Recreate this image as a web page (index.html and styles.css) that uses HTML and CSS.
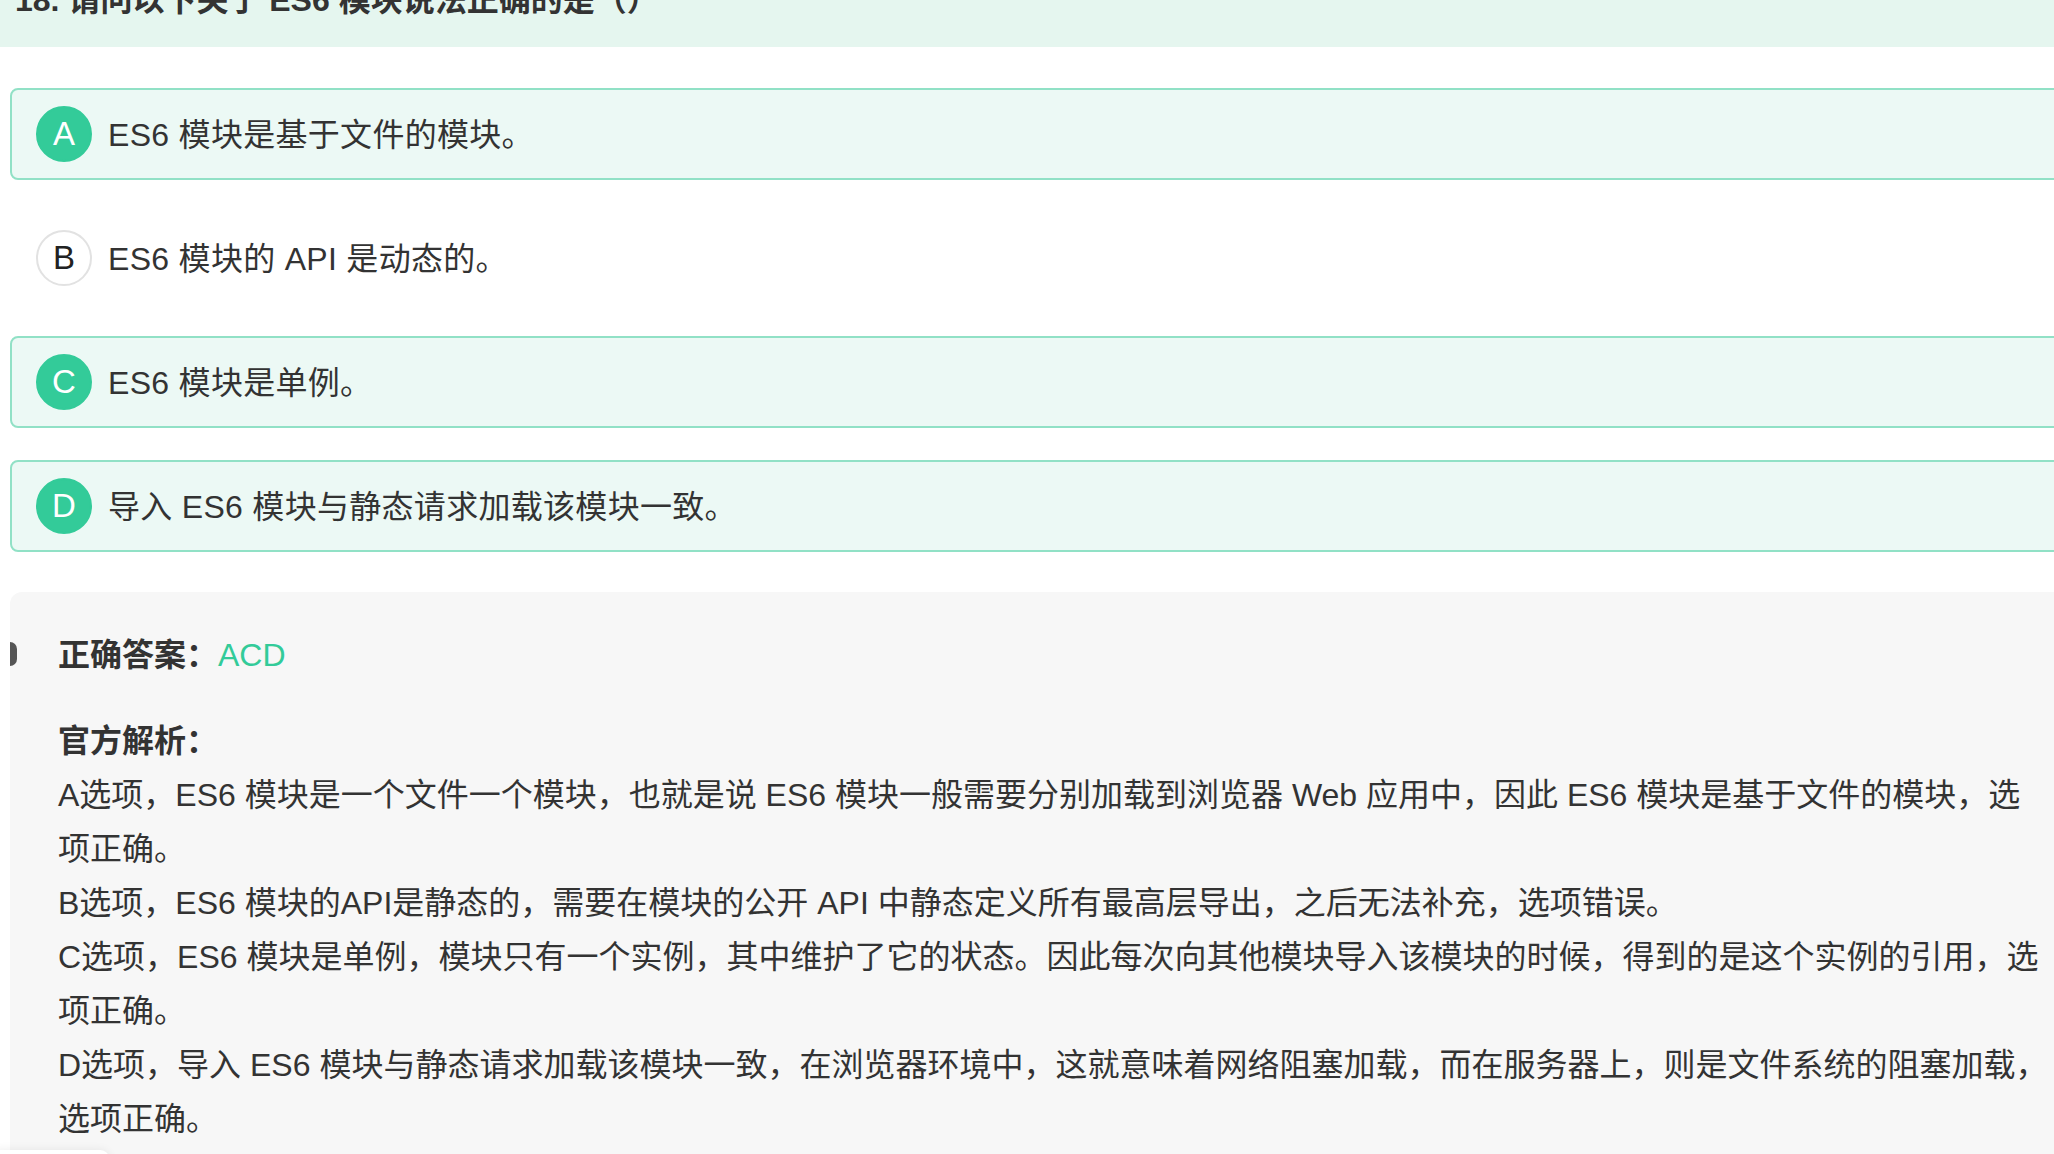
FILE: index.html
```html
<!DOCTYPE html>
<html lang="zh-CN">
<head>
<meta charset="utf-8">
<title>ES6 模块</title>
<link rel="stylesheet" href="styles.css">
</head>
<body>
<div class="page">
  <header class="q-title">18. 请问以下关于 ES6 模块说法正确的是（）</header>
  <ul class="options">
    <li class="option is-right"><span class="badge">A</span><span class="opt-text">ES6 模块是基于文件的模块。</span></li>
    <li class="option"><span class="badge">B</span><span class="opt-text">ES6 模块的 API 是动态的。</span></li>
    <li class="option is-right"><span class="badge">C</span><span class="opt-text">ES6 模块是单例。</span></li>
    <li class="option is-right"><span class="badge">D</span><span class="opt-text">导入 ES6 模块与静态请求加载该模块一致。</span></li>
  </ul>
  <section class="analysis">
    <span class="marker"></span>
    <div class="answer"><span class="label">正确答案：</span><span class="answer-value">ACD</span></div>
    <div class="label analysis-title">官方解析：</div>
    <div class="analysis-body">
      <p>A选项，ES6 模块是一个文件一个模块，也就是说 ES6 模块一般需要分别加载到浏览器 Web 应用中，因此 ES6 模块是基于文件的模块，选项正确。</p>
      <p>B选项，ES6 模块的API是静态的，需要在模块的公开 API 中静态定义所有最高层导出，之后无法补充，选项错误。</p>
      <p>C选项，ES6 模块是单例，模块只有一个实例，其中维护了它的状态。因此每次向其他模块导入该模块的时候，得到的是这个实例的引用，选项正确。</p>
      <p>D选项，导入 ES6 模块与静态请求加载该模块一致，在浏览器环境中，这就意味着网络阻塞加载，而在服务器上，则是文件系统的阻塞加载，选项正确。</p>
    </div>
  </section>
</div>
<div class="bottom-float"></div>
</body>
</html>
```
FILE: styles.css
```css
html, body {
  margin: 0;
  padding: 0;
  overflow: hidden;
  background: #ffffff;
}

body {
  width: 2054px;
  height: 1154px;
  font-family: "Liberation Sans", "Noto Sans CJK SC", sans-serif;
  color: #333333;
}

.page {
  width: 2120px;
  margin-top: -40px;
}

.q-title {
  background: #e5f6ef;
  padding: 13px 15px 20px;
  font-size: 32px;
  line-height: 54px;
  font-weight: bold;
  color: #333333;
}

.options {
  list-style: none;
  margin: 41px 0 0 10px;
  padding: 0;
  display: flex;
  flex-direction: column;
  gap: 32px;
}

.option {
  display: flex;
  align-items: center;
  gap: 16px;
  height: 92px;
  box-sizing: border-box;
  padding: 0 24px;
  border: 2px solid transparent;
  border-radius: 8px;
  font-size: 32px;
  color: #333333;
}

.option.is-right {
  background: #ecf9f5;
  border-color: #91e1c6;
}

.badge {
  flex: none;
  width: 56px;
  height: 56px;
  box-sizing: border-box;
  border-radius: 50%;
  border: 2px solid #e2e2e2;
  background: #ffffff;
  color: #222222;
  display: flex;
  align-items: center;
  justify-content: center;
  font-size: 33px;
}

.is-right .badge {
  background: #33cb99;
  border-color: #33cb99;
  color: #ffffff;
}

.opt-text {
  white-space: nowrap;
  letter-spacing: 0.3px;
  margin-top: -4px;
}

.analysis {
  position: relative;
  overflow: hidden;
  margin: 40px 0 0 10px;
  background: #f7f7f7;
  border-radius: 12px;
  padding: 36px 0 40px 48px;
  font-size: 32px;
  line-height: 54px;
  color: #333333;
}

.marker {
  position: absolute;
  left: -17px;
  top: 50px;
  width: 24px;
  height: 24px;
  border-radius: 7px;
  background: #555555;
}

.answer {
  margin-bottom: 32px;
}

.label {
  font-weight: bold;
}

.answer-value {
  color: #33cb99;
}

.analysis-body {
  width: 1993px;
}

.analysis-body p {
  margin: 0;
}

.bottom-float {
  position: fixed;
  left: -10px;
  bottom: -40px;
  width: 120px;
  height: 44px;
  background: #ffffff;
  border-radius: 10px;
  box-shadow: 0 0 10px rgba(0, 0, 0, 0.08);
}
```
